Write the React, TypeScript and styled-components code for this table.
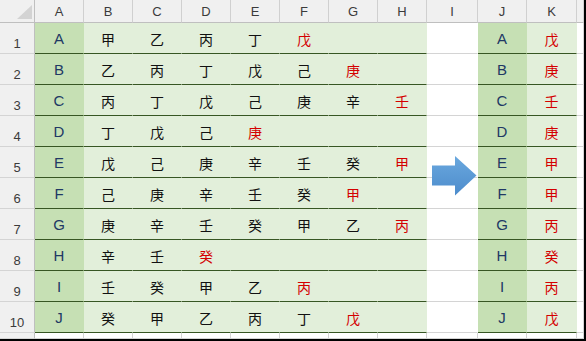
import React from "react";
import styled, { createGlobalStyle, css } from "styled-components";

const GlobalStyle = createGlobalStyle`
  html, body { margin: 0; padding: 0; background: #ffffff; overflow: hidden; }
  #root { width: 586px; height: 341px; }
`;

const COLS = ["A", "B", "C", "D", "E", "F", "G", "H", "I", "J", "K"];
const WIDTHS = [35, 49, 49, 49, 49, 49, 49, 49, 49, 51, 49, 50];

type Row = { key: string; stems: string[] };

const ROWS: Row[] = [
  { key: "A", stems: ["甲", "乙", "丙", "丁", "戊"] },
  { key: "B", stems: ["乙", "丙", "丁", "戊", "己", "庚"] },
  { key: "C", stems: ["丙", "丁", "戊", "己", "庚", "辛", "壬"] },
  { key: "D", stems: ["丁", "戊", "己", "庚"] },
  { key: "E", stems: ["戊", "己", "庚", "辛", "壬", "癸", "甲"] },
  { key: "F", stems: ["己", "庚", "辛", "壬", "癸", "甲"] },
  { key: "G", stems: ["庚", "辛", "壬", "癸", "甲", "乙", "丙"] },
  { key: "H", stems: ["辛", "壬", "癸"] },
  { key: "I", stems: ["壬", "癸", "甲", "乙", "丙"] },
  { key: "J", stems: ["癸", "甲", "乙", "丙", "丁", "戊"] },
];

const Sheet = styled.div`
  position: relative;
  box-sizing: border-box;
  width: 586px;
  height: 341px;
  border-right: 2px solid #000000;
  border-bottom: 2px solid #000000;
  display: grid;
  grid-template-columns: ${WIDTHS.map((w) => `${w}px`).join(" ")} 1fr;
  grid-template-rows: 23px repeat(10, 31px) 1fr;
  background: #ffffff;
  overflow: hidden;
`;

const headBase = css`
  box-sizing: border-box;
  background: #f0f0f0;
  color: #3b3b3b;
  font-family: "Liberation Sans", Arial, sans-serif;
  font-size: 13px;
  display: flex;
  justify-content: center;
`;

const Corner = styled.div`
  ${headBase};
  position: relative;
  border-right: 1px solid #bfbfbf;
  border-bottom: 1px solid #bfbfbf;
  &::after {
    content: "";
    position: absolute;
    right: 2px;
    bottom: 3px;
    width: 15px;
    height: 14px;
    background: #d3d3d3;
    clip-path: polygon(100% 0, 100% 100%, 0 100%);
  }
`;

const ColHead = styled.div`
  ${headBase};
  align-items: center;
  border-right: 1px solid #d0d0d0;
  border-bottom: 1px solid #bfbfbf;
  padding-top: 1px;
`;

const RowHead = styled.div`
  ${headBase};
  align-items: flex-end;
  padding-bottom: 3px;
  line-height: 13px;
  border-right: 1px solid #bfbfbf;
  border-bottom: 1px solid #d4d4d4;
`;

type Fill = "key" | "body" | "gap" | "empty";
type Tone = "latin" | "cjk" | "red";

const FILLS: Record<Fill, string> = {
  key: "#c6e0b4",
  body: "#e2efda",
  gap: "#ffffff",
  empty: "#ffffff",
};

const Cell = styled.div<{ $fill: Fill; $tone?: Tone }>`
  box-sizing: border-box;
  display: flex;
  align-items: center;
  justify-content: center;
  background: ${(p) => FILLS[p.$fill]};
  border-right: 1px solid
    ${(p) => (p.$fill === "empty" ? "#d4d4d4" : FILLS[p.$fill])};
  border-bottom: 1px solid
    ${(p) => (p.$fill === "key" || p.$fill === "body" ? "#375623" : "#d4d4d4")};
  font-family: ${(p) =>
    p.$tone === "latin"
      ? `"Liberation Sans", Arial, sans-serif`
      : `"Noto Sans CJK SC", "Noto Sans CJK TC", sans-serif`};
  font-size: ${(p) => (p.$tone === "latin" ? "15px" : "14px")};
  color: ${(p) =>
    p.$tone === "latin" ? "#203864" : p.$tone === "red" ? "#d40000" : "#111111"};
  line-height: 1;
  padding-top: 1px;
`;

const ArrowBox = styled.svg`
  position: absolute;
  left: 432px;
  top: 156px;
`;

function BlockArrow() {
  return (
    <ArrowBox width="45" height="40" viewBox="0 0 45 40">
      <defs>
        <linearGradient id="arrowFill" x1="0" y1="0" x2="0" y2="1">
          <stop offset="0" stopColor="#6aa8de" />
          <stop offset="1" stopColor="#4d8ccc" />
        </linearGradient>
      </defs>
      <path d="M0 9.5 H23 V0 L44.5 19.5 L23 39.5 V29.5 H0 Z" fill="url(#arrowFill)" />
    </ArrowBox>
  );
}

export default function App() {
  return (
    <>
      <GlobalStyle />
      <Sheet>
        <Corner />
        {COLS.map((c) => (
          <ColHead key={c}>{c}</ColHead>
        ))}
        <ColHead />
        {ROWS.map((row, i) => {
          const last = row.stems.length - 1;
          const result = row.stems[last];
          return (
            <React.Fragment key={row.key}>
              <RowHead>{i + 1}</RowHead>
              <Cell $fill="key" $tone="latin">{row.key}</Cell>
              {Array.from({ length: 7 }).map((_, j) => (
                <Cell
                  key={j}
                  $fill="body"
                  $tone={j === last ? "red" : "cjk"}
                >
                  {row.stems[j] ?? ""}
                </Cell>
              ))}
              <Cell $fill="gap" />
              <Cell $fill="key" $tone="latin">{row.key}</Cell>
              <Cell $fill="body" $tone="red">{result}</Cell>
              <Cell $fill="empty" />
            </React.Fragment>
          );
        })}
        <RowHead />
        {Array.from({ length: 12 }).map((_, j) => (
          <Cell key={`tail-${j}`} $fill="empty" />
        ))}
        <BlockArrow />
      </Sheet>
    </>
  );
}
